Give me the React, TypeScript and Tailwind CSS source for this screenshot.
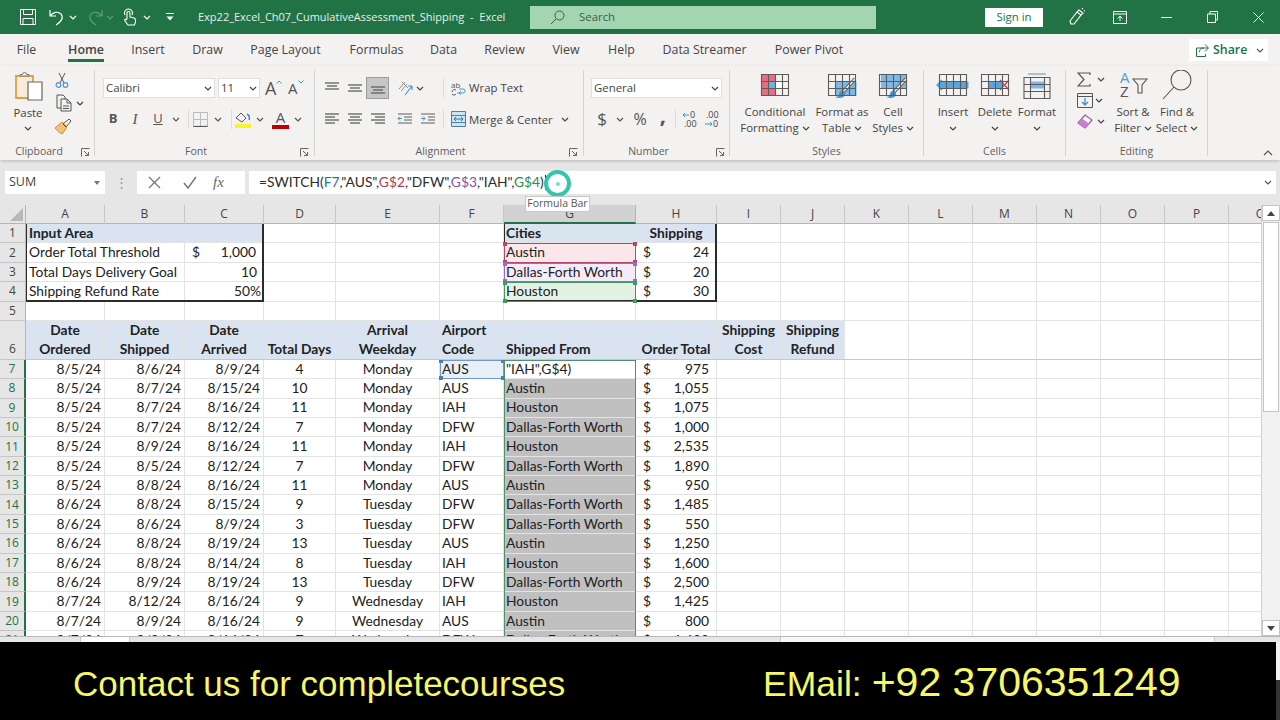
import { ReactNode } from 'react';

// Excel window, column and row sizes read off the screenshot
const columns = ['A', 'B', 'C', 'D', 'E', 'F', 'G', 'H', 'I', 'J', 'K', 'L', 'M', 'N', 'O', 'P', 'Q'];

const tabs = [
  { label: 'File', cls: 'w-[21px] ml-[16px]' },
  { label: 'Home', cls: 'w-[36px] ml-[31px] font-semibold border-b-[3px] border-[#217346]' },
  { label: 'Insert', cls: 'w-[32px] ml-[28px]' },
  { label: 'Draw', cls: 'w-[31px] ml-[28px]' },
  { label: 'Page Layout', cls: 'w-[71px] ml-[27px]' },
  { label: 'Formulas', cls: 'w-[53px] ml-[29px]' },
  { label: 'Data', cls: 'w-[27px] ml-[27px]' },
  { label: 'Review', cls: 'w-[41px] ml-[27px]' },
  { label: 'View', cls: 'w-[28px] ml-[27px]' },
  { label: 'Help', cls: 'w-[27px] ml-[28px]' },
  { label: 'Data Streamer', cls: 'w-[83px] ml-[28px]' },
  { label: 'Power Pivot', cls: 'w-[68px] ml-[29px]' },
];

const D = 'Dallas-Forth Worth';
const rowsData: [string, string, string, string, string, string, string, string][] = [
  ['8/5/24', '8/6/24', '8/9/24', '4', 'Monday', 'AUS', '"IAH",G$4)', '975'],
  ['8/5/24', '8/7/24', '8/15/24', '10', 'Monday', 'AUS', 'Austin', '1,055'],
  ['8/5/24', '8/7/24', '8/16/24', '11', 'Monday', 'IAH', 'Houston', '1,075'],
  ['8/5/24', '8/7/24', '8/12/24', '7', 'Monday', 'DFW', D, '1,000'],
  ['8/5/24', '8/9/24', '8/16/24', '11', 'Monday', 'IAH', 'Houston', '2,535'],
  ['8/5/24', '8/5/24', '8/12/24', '7', 'Monday', 'DFW', D, '1,890'],
  ['8/5/24', '8/8/24', '8/16/24', '11', 'Monday', 'AUS', 'Austin', '950'],
  ['8/6/24', '8/8/24', '8/15/24', '9', 'Tuesday', 'DFW', D, '1,485'],
  ['8/6/24', '8/6/24', '8/9/24', '3', 'Tuesday', 'DFW', D, '550'],
  ['8/6/24', '8/8/24', '8/19/24', '13', 'Tuesday', 'AUS', 'Austin', '1,250'],
  ['8/6/24', '8/8/24', '8/14/24', '8', 'Tuesday', 'IAH', 'Houston', '1,600'],
  ['8/6/24', '8/9/24', '8/19/24', '13', 'Tuesday', 'DFW', D, '2,500'],
  ['8/7/24', '8/12/24', '8/16/24', '9', 'Wednesday', 'IAH', 'Houston', '1,425'],
  ['8/7/24', '8/9/24', '8/16/24', '9', 'Wednesday', 'AUS', 'Austin', '800'],
  ['8/7/24', '8/8/24', '8/14/24', '7', 'Wednesday', 'DFW', D, '1,600'],
];

function Chev({ cls = '' }: { cls?: string }) {
  return (
    <svg width="8" height="5" viewBox="0 0 8 5" className={`shrink-0 ${cls}`}>
      <path d="M1 1l3 3 3-3" fill="none" stroke="currentColor" strokeWidth="1.2" />
    </svg>
  );
}

function Launcher() {
  return (
    <svg width="9" height="9" viewBox="0 0 9 9">
      <path d="M.5 8.5v-8h8M3 3l4.5 4.5M7.5 4v3.5H4" fill="none" stroke="#666" strokeWidth="1" />
    </svg>
  );
}

function Sep() {
  return <div className="w-px h-[86px] bg-[#d4d4d4] shrink-0" />;
}

function VSep({ cls }: { cls: string }) {
  return <div className={`w-px h-[20px] bg-[#dcdcdc] shrink-0 ${cls}`} />;
}

function Group({ w, label, launcher, children }: { w: string; label: string; launcher?: boolean; children: ReactNode }) {
  return (
    <div className={`flex flex-col h-[90px] shrink-0 ${w}`}>
      <div className="flex-1 min-h-0">{children}</div>
      <div className="h-[16px] grid grid-cols-[1fr_auto_1fr] items-center text-[10.5px] text-[#605e5c]">
        <span />
        <span className={launcher ? 'mr-[16px]' : ''}>{label}</span>
        <span className="flex justify-end pr-[4px]">{launcher && <Launcher />}</span>
      </div>
    </div>
  );
}

function Lines({ rows, selected }: { rows: [number, number, number][]; selected?: boolean }) {
  return (
    <div className={`w-[23px] h-[22px] -my-px flex items-center justify-center ${selected ? 'bg-[#c6c6c6] border border-[#9c9c9c]' : ''}`}>
      <svg width="16" height="14" viewBox="0 0 16 14">
        {rows.map(([a, b, y]) => (
          <path key={`${a}${y}`} d={`M${a} ${y}H${b}`} stroke="#5f5f5f" strokeWidth="1.3" />
        ))}
      </svg>
    </div>
  );
}

// Little worksheet grid that most of the big ribbon buttons start from
function SheetIcon({ children, w = 28 }: { children?: ReactNode; w?: number }) {
  return (
    <svg width={w + 6} height="27" viewBox={`0 0 ${w + 6} 27`}>
      {children}
      <path
        d={`M3.5 1.5h${w - 1}v21h-${w - 1}zM3.5 8.5h${w - 1}M3.5 15.5h${w - 1}M10.5 1.5v21M17.5 1.5v21M24.5 1.5v21`}
        fill="none"
        stroke="#5c5c5c"
        strokeWidth="1.1"
      />
    </svg>
  );
}

function Brush() {
  return (
    <>
      <path d="M30 6L17 20" stroke="#5c5c5c" strokeWidth="3.4" />
      <path d="M30 6L17 20" stroke="#f3f2f1" strokeWidth="1.6" />
      <path d="M19 18c-3-1-5 1-5 3s-2 3-4 3c4 2 9 1 10-2 .5-1.500 0-3-1-4z" fill="#4d93c8" />
    </>
  );
}

function BigButton({ w, icon, lines }: { w: string; icon: ReactNode; lines: ReactNode[] }) {
  return (
    <div className={`flex flex-col items-center pt-[3px] shrink-0 ${w}`}>
      <div className="h-[27px] flex items-center">{icon}</div>
      <div className="mt-[4px] flex flex-col items-center text-[11.4px] leading-[16px] text-[#444] whitespace-nowrap">
        {lines.map((l, i) => (
          <div key={i} className="h-[16px] flex items-center gap-[3px]">
            {l}
          </div>
        ))}
      </div>
    </div>
  );
}

function TitleBar() {
  return (
    <div className="h-[34px] bg-[#217346] flex items-center shrink-0 text-white">
      <svg width="16" height="16" viewBox="0 0 16 16" className="ml-[20px] shrink-0">
        <path d="M.5.5h15v15H.5zM3.500.5v5h9v-5M3 15.500v-6h10v6" fill="none" stroke="#fff" strokeWidth="1" />
      </svg>
      <svg width="15" height="17" viewBox="0 0 15 17" className="ml-[13px] shrink-0">
        <path d="M1 1v6h6M1 7c3-4 8-5 11-2 3 4 0 8-5 11" fill="none" stroke="#fff" strokeWidth="1.2" />
      </svg>
      <Chev cls="ml-[5px]" />
      <svg width="15" height="17" viewBox="0 0 15 17" className="ml-[11px] shrink-0">
        <path d="M14 1v6H8M14 7c-3-4-8-5-11-2-3 4 0 8 5 11" fill="none" stroke="#5f9c78" strokeWidth="1.2" />
      </svg>
      <Chev cls="ml-[3px] text-[#5f9c78]" />
      <svg width="14" height="18" viewBox="0 0 14 18" className="ml-[8px] shrink-0">
        <path
          d="M5 11V5a1.500 1.500 0 013 0v4l4 1c1 .5 1.500 1 1.500 2v2l-1 3H6l-3-4c-1-2 1-2 2-1M3 7a4 4 0 117 0"
          fill="none"
          stroke="#fff"
          strokeWidth="1.1"
        />
      </svg>
      <Chev cls="ml-[7px]" />
      <svg width="8" height="8" viewBox="0 0 8 8" className="ml-[15px] shrink-0">
        <path d="M0 .5h8" stroke="#fff" />
        <path d="M.5 3.500h7L4 7.500z" fill="#fff" />
      </svg>
      <div className="ml-[24px] w-[316px] whitespace-nowrap text-[11px] text-[#e4f0e9] shrink-0">
        Exp22_Excel_Ch07_CumulativeAssessment_Shipping&nbsp; -&nbsp; Excel
      </div>
      <div className="ml-[16px] w-[346px] h-[23px] bg-[#a3d5b1] flex items-center shrink-0 text-[#3b5f49] text-[11.4px]">
        <svg width="15" height="15" viewBox="0 0 15 15" className="ml-[20px] shrink-0">
          <circle cx="9.500" cy="5.500" r="4.500" fill="none" stroke="#3b5f49" strokeWidth="1" />
          <path d="M6 9l-5 5" stroke="#3b5f49" strokeWidth="1" />
        </svg>
        <span className="ml-[14px]">Search</span>
      </div>
      <div className="ml-[109px] w-[58px] h-[19px] bg-white text-[#217346] text-[11.4px] flex items-center justify-center shrink-0">
        Sign in
      </div>
      <svg width="16" height="18" viewBox="0 0 16 18" className="ml-[26px] shrink-0">
        <path d="M2 16l-1-3 7-9 4 3-7 9zM8 4l2-2 4 3-2 2M13 1l1-1M15 3l1-.5" fill="none" stroke="#fff" strokeWidth="1.1" />
      </svg>
      <svg width="14" height="13" viewBox="0 0 14 13" className="ml-[28px] shrink-0">
        <path d="M.5.500h13v12H.5zM.5 3h13M7 10V5M4.500 7.500L7 5l2.500 2.500" fill="none" stroke="#fff" strokeWidth="1" />
      </svg>
      <div className="ml-[34px] w-[11px] h-px bg-white shrink-0" />
      <svg width="11" height="12" viewBox="0 0 11 12" className="ml-[35px] shrink-0">
        <path d="M.5 3h8v8.500h-8zM3 3V.5h7.500V9H8.500" fill="none" stroke="#fff" strokeWidth="1" />
      </svg>
      <svg width="11" height="11" viewBox="0 0 11 11" className="ml-[35px] shrink-0">
        <path d="M.5.5l10 10M10.500.5l-10 10" stroke="#fff" strokeWidth="1" />
      </svg>
    </div>
  );
}

function TabRow() {
  return (
    <div className="h-[32px] bg-[#f3f2f1] flex items-start pt-[6px] shrink-0 text-[12.4px] text-[#444]">
      {tabs.map((t) => (
        <div key={t.label} className={`h-[22px] leading-[20px] whitespace-nowrap flex justify-center shrink-0 ${t.cls}`}>
          {t.label}
        </div>
      ))}
      <div className="ml-auto mr-[12px] -mt-[1px] w-[79px] h-[22px] bg-white flex items-center text-[#217346] text-[12.4px] font-semibold shrink-0">
        <svg width="13" height="13" viewBox="0 0 13 13" className="ml-[7px] shrink-0">
          <path d="M9 .5l3.500 3.500L9 7.500M12 4H7C4.500 4 3.500 6 3.500 8M8 4H.5v8.500h9V10" fill="none" stroke="#217346" strokeWidth="1" />
        </svg>
        <span className="ml-[4px]">Share</span>
        <Chev cls="ml-[9px] text-[#555]" />
      </div>
    </div>
  );
}

function Ribbon() {
  return (
    <div className="h-[94px] bg-[#f3f2f1] flex pt-[4px] shrink-0 relative z-10 shadow-[0_1px_3px_rgba(0,0,0,0.2)]">
      <Group w="w-[94px]" label="Clipboard" launcher>
        <div className="flex pt-[2px]">
          <div className="w-[52px] flex flex-col items-center text-[#444] text-[11.4px] ml-[2px] shrink-0">
            <svg width="30" height="29" viewBox="0 0 30 29">
              <path d="M3 4h17v22H3z" fill="#f6ecd8" stroke="#d6a24c" strokeWidth="1.800" />
              <path d="M7 4h9v-1.500h-2.500a2 2 0 00-4 0H7z" fill="#fff" stroke="#777" strokeWidth="1" />
              <path d="M15 10h14v18H15z" fill="#fff" stroke="#666" strokeWidth="1.200" />
            </svg>
            <span className="mt-[4px] leading-[16px]">Paste</span>
            <Chev cls="mt-[5px]" />
          </div>
          <div className="flex flex-col gap-[6px] text-[#444]">
            <svg width="16" height="16" viewBox="0 0 16 16">
              <path d="M5 1l5 10M11 1L6 11" stroke="#555" strokeWidth="1" />
              <circle cx="4.500" cy="13" r="2.300" fill="none" stroke="#4f96c9" strokeWidth="1.200" />
              <circle cx="11.500" cy="13" r="2.300" fill="none" stroke="#4f96c9" strokeWidth="1.200" />
            </svg>
            <div className="flex items-center gap-[1px]">
              <svg width="19" height="18" viewBox="0 0 19 18">
                <path d="M3 1h6l2 2v2M3 1v13h4M7 5h6l4 4v8H7zM13 5v4h4M9 12h6M9 14.500h6" fill="none" stroke="#555" strokeWidth="1" />
              </svg>
              <Chev cls="ml-[2px]" />
            </div>
            <svg width="18" height="17" viewBox="0 0 18 17">
              <path d="M1 10l7-6 5 5-5 7c-2-1-5-3-7-6z" fill="#f0c27a" stroke="#d68a2c" strokeWidth="1" />
              <path d="M9 6l6-5 2 2-5 6z" fill="none" stroke="#555" strokeWidth="1" />
            </svg>
          </div>
        </div>
      </Group>
      <Sep />
      <Group w="w-[218px]" label="Font" launcher>
        <div className="pt-[8px] flex flex-col gap-[11px] text-[#444]">
          <div className="flex items-center h-[20px]">
            <div className="ml-[8px] w-[112px] h-[20px] bg-white border border-[#e1dfdd] flex items-center justify-between px-[2px] text-[11.4px] shrink-0">
              Calibri
              <Chev />
            </div>
            <div className="ml-[3px] w-[42px] h-[20px] bg-white border border-[#e1dfdd] flex items-center justify-between px-[2px] text-[11.4px] shrink-0">
              11
              <Chev />
            </div>
            <div className="ml-[5px] w-[17px] flex items-start text-[#555] text-[18px] leading-[20px] shrink-0">
              A
              <svg width="6" height="4" viewBox="0 0 6 4" className="mt-[2px] shrink-0">
                <path d="M.5 3.500L3 1l2.500 2.500" fill="none" stroke="#3b9ac4" />
              </svg>
            </div>
            <div className="ml-[6px] w-[15px] flex items-start text-[#555] text-[15px] leading-[20px] shrink-0">
              A
              <svg width="6" height="4" viewBox="0 0 6 4" className="mt-[2px] shrink-0">
                <path d="M.5.5L3 3l2.500-2.500" fill="none" stroke="#3b9ac4" />
              </svg>
            </div>
          </div>
          <div className="flex items-center h-[20px] text-[13px] text-[#555]">
            <div className="ml-[8px] w-[20px] text-center font-bold shrink-0">B</div>
            <div className="ml-[2px] w-[20px] text-center italic font-['Liberation_Serif'] text-[15px] shrink-0">I</div>
            <div className="ml-[3px] w-[20px] text-center underline shrink-0">U</div>
            <Chev cls="ml-[4px]" />
            <VSep cls="ml-[8px]" />
            <svg width="15" height="15" viewBox="0 0 15 15" className="ml-[4px] shrink-0">
              <path d="M.5.5h14v14H.5z" fill="none" stroke="#bbb" />
              <path d="M7.500 1v13M1 7.500h13" stroke="#bbb" />
              <path d="M.5 14.500h14" stroke="#555" strokeWidth="1.200" />
            </svg>
            <Chev cls="ml-[6px]" />
            <VSep cls="ml-[9px]" />
            <svg width="16" height="17" viewBox="0 0 16 17" className="ml-[3px] shrink-0">
              <path d="M1 7l5-5 5 5-4 4z" fill="none" stroke="#555" />
              <path d="M12 3c2 1 3 3 2 6" fill="none" stroke="#3b7fb3" strokeWidth="1.400" />
              <path d="M0 13h16v4H0z" fill="#f5f52a" />
            </svg>
            <Chev cls="ml-[5px]" />
            <div className="ml-[8px] w-[17px] flex flex-col items-center shrink-0">
              <span className="text-[15px] leading-[15px] text-[#555]">A</span>
              <span className="w-[17px] h-[4px] bg-[#c00000]" />
            </div>
            <Chev cls="ml-[5px]" />
          </div>
        </div>
      </Group>
      <div className="w-px" />
      <Sep />
      <Group w="w-[267px]" label="Alignment" launcher>
        <div className="pt-[8px] flex flex-col gap-[11px] text-[#444] text-[11.4px]">
          <div className="flex items-center h-[20px]">
            <div className="ml-[5px]" />
            <Lines rows={[[1, 15, 2], [3, 13, 5], [1, 15, 8]]} />
            <Lines rows={[[1, 15, 4], [3, 13, 7], [1, 15, 10]]} />
            <Lines selected rows={[[1, 15, 6], [3, 13, 9], [1, 15, 12]]} />
            <svg width="17" height="16" viewBox="0 0 17 16" className="ml-[8px] shrink-0">
              <path d="M2 9l6-7M4 11l6-7M5 2l6 6" stroke="#8c8c8c" strokeWidth="1" />
              <path d="M8 15L15 6M15 6h-4M15 6v4" fill="none" stroke="#4f96c9" strokeWidth="1.200" />
            </svg>
            <Chev cls="ml-[2px]" />
            <VSep cls="ml-[19px]" />
            <svg width="15" height="17" viewBox="0 0 15 17" className="ml-[7px] shrink-0 overflow-visible">
              <text x="0" y="8" fontSize="8" fill="#555" fontFamily="Open Sans">ab</text>
              <path d="M1 12a2.500 2.500 0 014-2M5 14a2.500 2.500 0 01-4 0" fill="none" stroke="#555" strokeWidth="1" />
              <path d="M6 13h6a2 2 0 000-4H8M8 13l2 2M8 13l2-2" fill="none" stroke="#4f96c9" strokeWidth="1" />
            </svg>
            <span className="ml-[3px] whitespace-nowrap">Wrap Text</span>
          </div>
          <div className="flex items-center h-[20px]">
            <div className="ml-[5px]" />
            <Lines rows={[[1, 15, 2], [1, 11, 5], [1, 15, 8], [1, 11, 11]]} />
            <Lines rows={[[1, 15, 2], [3, 13, 5], [1, 15, 8], [3, 13, 11]]} />
            <Lines rows={[[1, 15, 2], [5, 15, 5], [1, 15, 8], [5, 15, 11]]} />
            <svg width="16" height="14" viewBox="0 0 16 14" className="ml-[8px] shrink-0">
              <path d="M1 2h14M7 5h8M7 8h8M1 11h14" stroke="#5f5f5f" strokeWidth="1.200" />
              <path d="M5 6.500H1M3 4.500l-2 2 2 2" fill="none" stroke="#3b9ac4" strokeWidth="1" />
            </svg>
            <svg width="16" height="14" viewBox="0 0 16 14" className="ml-[7px] shrink-0">
              <path d="M1 2h14M8 5h7M8 8h7M1 11h14" stroke="#5f5f5f" strokeWidth="1.200" />
              <path d="M1 6.500h4M3 4.500l2 2-2 2" fill="none" stroke="#3b9ac4" strokeWidth="1" />
            </svg>
            <VSep cls="ml-[7px]" />
            <svg width="15" height="16" viewBox="0 0 15 16" className="ml-[7px] shrink-0">
              <path d="M.5.5h14v15H.5z" fill="#cfe4f3" stroke="#4f7fa3" />
              <path d="M.5 4.500h14M.5 11.500h14" stroke="#4f7fa3" />
              <path d="M3 8h9M5 6L3 8l2 2M10 6l2 2-2 2" fill="none" stroke="#2f77ab" />
            </svg>
            <span className="ml-[3px] w-[84px] mt-[2px] whitespace-nowrap shrink-0">Merge &amp; Center</span>
            <Chev cls="ml-[8px]" />
          </div>
        </div>
      </Group>
      <div className="w-px" />
      <Sep />
      <Group w="w-[145px]" label="Number" launcher>
        <div className="pt-[8px] flex flex-col gap-[11px] text-[#444]">
          <div className="flex items-center h-[20px]">
            <div className="ml-[7px] w-[131px] h-[20px] bg-white border border-[#e1dfdd] flex items-center justify-between px-[2px] text-[11.4px] shrink-0">
              General
              <Chev />
            </div>
          </div>
          <div className="flex items-center h-[20px] text-[#555]">
            <div className="ml-[11px] w-[14px] text-center text-[17px] shrink-0">$</div>
            <Chev cls="ml-[7px]" />
            <div className="ml-[8px] w-[16px] text-center text-[16px] shrink-0">%</div>
            <div className="ml-[8px] w-[14px] h-[20px] text-center text-[22px] font-bold leading-[10px] shrink-0">,</div>
            <VSep cls="ml-[5px]" />
            <svg width="16" height="18" viewBox="0 0 16 18" className="ml-[6px] shrink-0 overflow-visible">
              <text x="8" y="8" fontSize="9" fill="#444" fontFamily="Open Sans">0</text>
              <text x="2" y="17" fontSize="9" fill="#444" fontFamily="Open Sans">.00</text>
              <path d="M7 5H1M3 3L1 5l2 2" fill="none" stroke="#3b9ac4" />
            </svg>
            <svg width="16" height="18" viewBox="0 0 16 18" className="ml-[6px] shrink-0 overflow-visible">
              <text x="2" y="8" fontSize="9" fill="#444" fontFamily="Open Sans">.00</text>
              <text x="9" y="17" fontSize="9" fill="#444" fontFamily="Open Sans">0</text>
              <path d="M1 14h7M6 12l2 2-2 2" fill="none" stroke="#3b9ac4" />
            </svg>
          </div>
        </div>
      </Group>
      <Sep />
      <Group w="w-[193px]" label="Styles">
        <div className="flex">
          <BigButton
            w="w-[90px]"
            lines={['Conditional', <>Formatting <Chev /></>]}
            icon={
              <SheetIcon>
                <path d="M3.500 1.500h14v7h7v7h-7v7h-14z" fill="#e96d80" />
                <path d="M10.500 8.500h7v7h-7z" fill="#6fb1e0" />
                <path d="M17.500 8.500h7v7h-7z" fill="#fff" />
              </SheetIcon>
            }
          />
          <BigButton
            w="w-[44px]"
            lines={['Format as', <>Table <Chev /></>]}
            icon={
              <SheetIcon>
                <path d="M10.500 8.500h21v14h-21z" fill="#7db9e6" />
                <Brush />
              </SheetIcon>
            }
          />
          <BigButton
            w="w-[58px]"
            lines={['Cell', <>Styles <Chev /></>]}
            icon={
              <SheetIcon>
                <path d="M5 2h26v14H5z" fill="#7db9e6" />
                <Brush />
              </SheetIcon>
            }
          />
        </div>
      </Group>
      <Sep />
      <Group w="w-[141px]" label="Cells">
        <div className="flex pl-[8px]">
          <BigButton
            w="w-[42px]"
            lines={['Insert', <Chev />]}
            icon={
              <SheetIcon>
                <path d="M3.500 8.500h29v7h-29z" fill="#5aa5d9" />
                <path d="M12 12H1M6 7l-5 5 5 5" fill="none" stroke="#5aa5d9" strokeWidth="1.400" />
              </SheetIcon>
            }
          />
          <BigButton
            w="w-[42px]"
            lines={['Delete', <Chev />]}
            icon={
              <SheetIcon>
                <path d="M10.500 8.500h14v7h-14z" fill="#5aa5d9" />
                <path d="M22 7l9 10M31 7l-9 10" stroke="#d9434f" strokeWidth="1.400" />
              </SheetIcon>
            }
          />
          <BigButton
            w="w-[42px]"
            lines={['Format', <Chev />]}
            icon={
              <svg width="28" height="27" viewBox="0 0 28 27">
                <path d="M7 1h14M6 0v2M22 0v2" stroke="#4f96c9" />
                <path d="M7.500 8.500h14v7h-14z" fill="#7db9e6" />
                <path d="M1 4.500h26v21H1zM1 11.500h26M1 18.500h26M7.500 4.500v21M21.500 4.500v21" fill="none" stroke="#5c5c5c" strokeWidth="1.100" />
              </svg>
            }
          />
        </div>
      </Group>
      <Sep />
      <Group w="w-[141px]" label="Editing">
        <div className="flex">
          <div className="w-[45px] pl-[11px] pt-[2px] flex flex-col gap-[6px] shrink-0 text-[#444]">
            <div className="flex items-center gap-[6px]">
              <svg width="14" height="15" viewBox="0 0 14 15">
                <path d="M13 3V1H1l6 6.500L1 14h12v-2" fill="none" stroke="#555" strokeWidth="1.200" />
              </svg>
              <Chev />
            </div>
            <div className="flex items-center gap-[2px]">
              <svg width="16" height="15" viewBox="0 0 16 15">
                <path d="M.5.500h15v14H.5zM.5 3.500h15" fill="none" stroke="#555" />
                <path d="M8 5v7M5 9l3 3 3-3" fill="none" stroke="#3b8fc9" strokeWidth="1.300" />
              </svg>
              <Chev />
            </div>
            <div className="flex items-center gap-[4px]">
              <svg width="16" height="15" viewBox="0 0 16 15">
                <path d="M1 9l7-8 7 5-7 8z" fill="#fff" stroke="#a64fb0" strokeWidth="1.200" />
                <path d="M1 9l4-4.500 7 5L8 14z" fill="#c77fd0" />
              </svg>
              <Chev />
            </div>
          </div>
          <div className="w-[44px] flex flex-col items-center shrink-0 text-[11.4px] leading-[16px] text-[#444]">
            <svg width="32" height="30" viewBox="0 0 32 30" className="shrink-0 overflow-visible">
              <text x="3" y="13" fontSize="15" fill="#4f9fc9" fontFamily="Open Sans">A</text>
              <text x="3" y="27" fontSize="15" fill="#555" fontFamily="Open Sans">Z</text>
              <path d="M16 9h14l-5 6v8h-4v-8z" fill="none" stroke="#555" strokeWidth="1.100" />
            </svg>
            <div className="mt-[4px] whitespace-nowrap">Sort &amp;</div>
            <div className="whitespace-nowrap flex items-center gap-[3px]">Filter <Chev /></div>
          </div>
          <div className="w-[44px] flex flex-col items-center shrink-0 text-[11.4px] leading-[16px] text-[#444]">
            <svg width="32" height="30" viewBox="0 0 32 30" className="shrink-0">
              <circle cx="20" cy="10" r="10" fill="none" stroke="#555" strokeWidth="1.100" />
              <path d="M13 17L2 29" stroke="#555" strokeWidth="1.100" />
            </svg>
            <div className="mt-[4px] whitespace-nowrap">Find &amp;</div>
            <div className="whitespace-nowrap flex items-center gap-[3px]">Select <Chev /></div>
          </div>
        </div>
      </Group>
      <Sep />
      <div className="flex-1 flex items-end justify-end pb-[4px] pr-[7px] text-[#555]">
        <svg width="10" height="6" viewBox="0 0 10 6">
          <path d="M1 5l4-4 4 4" fill="none" stroke="currentColor" strokeWidth="1.200" />
        </svg>
      </div>
    </div>
  );
}

function FormulaBar() {
  return (
    <div className="h-[45px] bg-[#e6e6e6] flex pt-[11px] shrink-0 text-[#444]">
      <div className="ml-[5px] w-[100px] h-[23px] bg-white flex items-center justify-between pl-[4px] pr-[5px] text-[12.5px] shrink-0">
        SUM
        <svg width="6" height="4" viewBox="0 0 6 4"><path d="M0 0h6L3 4z" fill="#777" /></svg>
      </div>
      <div className="w-[32px] h-[23px] flex items-center justify-center text-[#999] text-[13px] shrink-0">⋮</div>
      <div className="w-[108px] h-[23px] bg-white flex items-center shrink-0">
        <svg width="13" height="13" viewBox="0 0 13 13" className="ml-[11px] shrink-0">
          <path d="M1 1l11 11M12 1L1 12" stroke="#777" strokeWidth="1.300" />
        </svg>
        <svg width="14" height="13" viewBox="0 0 14 13" className="ml-[22px] shrink-0">
          <path d="M1 7l4 5 8-11" fill="none" stroke="#777" strokeWidth="1.500" />
        </svg>
        <span className="ml-[16px] italic font-['Liberation_Serif'] text-[15px] text-[#666]">fx</span>
      </div>
      <div className="ml-[4px] w-[1027px] h-[23px] bg-white flex items-center pl-[10px] pr-[4px] shrink-0 font-['Lato'] text-[13.8px] text-[#2b2b2b]">
        <span className="whitespace-nowrap">
          =SWITCH(<span className="text-[#2f6ea8]">F7</span>,"AUS",<span className="text-[#b23a55]">G$2</span>,"DFW",
          <span className="text-[#8a4fa8]">G$3</span>,"IAH",<span className="text-[#2f8a4f]">G$4</span>)
        </span>
        <span className="w-px h-[15px] bg-[#222] ml-px" />
        <Chev cls="ml-auto text-[#555]" />
      </div>
    </div>
  );
}

function Handles({ color }: { color: string }) {
  return (
    <>
      <span className={`absolute -left-[2px] -top-[2px] w-[4px] h-[4px] ${color}`} />
      <span className={`absolute -right-[2px] -top-[2px] w-[4px] h-[4px] ${color}`} />
      <span className={`absolute -left-[2px] -bottom-[2px] w-[4px] h-[4px] ${color}`} />
      <span className={`absolute -right-[2px] -bottom-[2px] w-[4px] h-[4px] ${color}`} />
    </>
  );
}

const line = 'border-r border-b border-[#e3e3e3]';
const cell = `${line} flex items-center whitespace-nowrap min-w-0`;

function Money({ v, cls = '' }: { v: string; cls?: string }) {
  return (
    <div className={`${cell} justify-between pl-[7px] pr-[7px] ${cls}`}>
      <span>$</span>
      <span>{v}</span>
    </div>
  );
}

function Blank({ n, cls = '' }: { n: number; cls?: string }) {
  return (
    <>
      {Array.from({ length: n }, (_, i) => (
        <div key={i} className={`${line} ${cls}`} />
      ))}
    </>
  );
}

function RowHead({ n, on, end }: { n: number; on?: boolean; end?: boolean }) {
  return (
    <div
      className={`bg-[#e6e6e6] border-b border-[#c6c6c6] flex justify-center font-['Open_Sans'] text-[12px] ${
        end ? 'items-end pb-[1px]' : 'items-center'
      } ${on ? 'text-[#217346] border-r-2 border-r-[#217346]' : 'text-[#444] border-r border-r-[#b5b5b5]'}`}
    >
      {n}
    </div>
  );
}

function Sheet() {
  const fill = 'bg-[#d9e4f0]';
  const headCell = `${line} ${fill} font-bold flex flex-col justify-end text-center leading-[19.5px]`;
  return (
    <div className="flex flex-1 min-h-0">
      <div className="w-[1261px] overflow-hidden shrink-0 bg-white">
        <div className="relative grid grid-cols-[26px_79px_80px_79px_72px_104px_64px_132px_81px_64px_64px_64px_64px_64px_64px_64px_64px_64px] grid-rows-[19px_repeat(5,19.4px)_38.8px_repeat(15,19.4px)] font-['Lato'] text-[13.8px] text-[#222]">
          {/* column headers */}
          <div className="bg-[#e6e6e6] border-r border-b border-[#b5b5b5] flex items-end justify-end p-[2px]">
            <svg width="13" height="13" viewBox="0 0 13 13"><path d="M13 0v13H0z" fill="#b8b8b8" /></svg>
          </div>
          {columns.map((c) => (
            <div
              key={c}
              className={`flex items-center justify-center font-['Open_Sans'] text-[12px] text-[#444] border-r ${
                c === 'G'
                  ? 'bg-[#d2d2d2] border-b-2 border-b-[#217346] border-r-[#b5b5b5]'
                  : 'bg-[#e6e6e6] border-b border-b-[#b5b5b5] border-r-[#c6c6c6]'
              }`}
            >
              {c}
            </div>
          ))}

          {/* row 1 */}
          <RowHead n={1} />
          <div className={`${cell} ${fill} border-r-0 font-bold pl-[3px]`}>Input Area</div>
          <div className={`${cell} ${fill} border-r-0`} />
          <div className={`${cell} ${fill}`} />
          <Blank n={3} />
          <div className={`${cell} ${fill} font-bold pl-[2px]`}>Cities</div>
          <div className={`${cell} ${fill} font-bold justify-center`}>Shipping</div>
          <Blank n={9} />

          {/* row 2 */}
          <RowHead n={2} />
          <div className={`${cell} border-r-0 pl-[3px]`}>Order Total Threshold</div>
          <div className={cell} />
          <Money v="1,000" cls="pr-[6px]" />
          <Blank n={3} />
          <div className={`${cell} bg-[#fbe7ea] pl-[2px]`}>Austin</div>
          <Money v="24" />
          <Blank n={9} />

          {/* row 3 */}
          <RowHead n={3} />
          <div className={`${cell} border-r-0 pl-[3px]`}>Total Days Delivery Goal</div>
          <div className={cell} />
          <div className={`${cell} justify-end pr-[6px]`}>10</div>
          <Blank n={3} />
          <div className={`${cell} bg-[#f3ebf8] pl-[2px]`}>{D}</div>
          <Money v="20" />
          <Blank n={9} />

          {/* row 4 */}
          <RowHead n={4} />
          <div className={`${cell} border-r-0 pl-[3px]`}>Shipping Refund Rate</div>
          <div className={cell} />
          <div className={`${cell} justify-end pr-[2px]`}>50%</div>
          <Blank n={3} />
          <div className={`${cell} bg-[#e4f2e6] pl-[2px]`}>Houston</div>
          <Money v="30" />
          <Blank n={9} />

          {/* row 5 */}
          <RowHead n={5} />
          <Blank n={17} />

          {/* row 6 */}
          <RowHead n={6} end />
          <div className={headCell}><span>Date</span><span>Ordered</span></div>
          <div className={headCell}><span>Date</span><span>Shipped</span></div>
          <div className={headCell}><span>Date</span><span>Arrived</span></div>
          <div className={headCell}><span>Total Days</span></div>
          <div className={headCell}><span>Arrival</span><span>Weekday</span></div>
          <div className={`${headCell} text-left pl-[2px]`}><span>Airport</span><span>Code</span></div>
          <div className={`${headCell} text-left pl-[2px]`}><span>Shipped From</span></div>
          <div className={headCell}><span>Order Total</span></div>
          <div className={headCell}><span>Shipping</span><span>Cost</span></div>
          <div className={headCell}><span>Shipping</span><span>Refund</span></div>
          <Blank n={7} />

          {/* data rows */}
          {rowsData.map((r, i) => (
            <div key={i} className="contents">
              <RowHead n={i + 7} on />
              <div className={`${cell} justify-end pr-[3px]`}>{r[0]}</div>
              <div className={`${cell} justify-end pr-[3px]`}>{r[1]}</div>
              <div className={`${cell} justify-end pr-[3px]`}>{r[2]}</div>
              <div className={`${cell} justify-center`}>{r[3]}</div>
              <div className={`${cell} justify-center`}>{r[4]}</div>
              <div className={`${cell} pl-[2px] ${i === 0 ? 'bg-[#e9eff7]' : ''}`}>{r[5]}</div>
              <div className={`${cell} pl-[2px] ${i === 0 ? 'bg-white' : 'bg-[#c0c0c0] border-[#b4b4b4]'}`}>{r[6]}</div>
              <Money v={r[7]} />
              <Blank n={9} />
            </div>
          ))}

          {/* borders and reference colours that sit over the cells */}
          <div className="absolute inset-0 col-start-2 col-end-5 row-start-2 row-end-6 border-l border-r-2 border-b-2 border-[#2b2b2b] pointer-events-none" />
          <div className="absolute inset-0 col-start-8 col-end-10 row-start-2 row-end-6 border-l border-r-2 border-b-2 border-[#2b2b2b] pointer-events-none" />
          <div className="absolute inset-0 col-start-8 col-end-9 row-start-3 row-end-4 border-[1.5px] border-[#b5476a] pointer-events-none">
            <Handles color="bg-[#b5476a]" />
          </div>
          <div className="absolute inset-0 col-start-8 col-end-9 row-start-4 row-end-5 border-[1.5px] border-[#9a6cc0] pointer-events-none">
            <Handles color="bg-[#9a6cc0]" />
          </div>
          <div className="absolute inset-0 col-start-8 col-end-9 row-start-5 row-end-6 border-[1.5px] border-[#3f9a5f] pointer-events-none">
            <Handles color="bg-[#3f9a5f]" />
          </div>
          <div className="absolute inset-0 col-start-7 col-end-8 row-start-8 row-end-9 border-[1.5px] border-[#6f9ac6] pointer-events-none">
            <Handles color="bg-[#4a80b8]" />
          </div>
          <div className="absolute inset-0 col-start-8 col-end-9 row-start-8 row-end-23 border-[1.5px] border-[#4f9070] pointer-events-none" />
          <div className="absolute inset-x-0 top-[-1px] h-px col-start-2 col-end-19 row-start-8 row-end-9 bg-[#c8c8c8] pointer-events-none" />
        </div>
      </div>
      <div className="flex-1 flex flex-col bg-[#f1f1f1] border-l border-[#d0d0d0]">
        <div className="h-[16px] bg-white border border-[#c4c4c4] flex items-center justify-center shrink-0">
          <svg width="8" height="5" viewBox="0 0 8 5"><path d="M0 5h8L4 0z" fill="#444" /></svg>
        </div>
        <div className="h-[190px] bg-white border border-[#c4c4c4] mx-px mt-px shrink-0" />
        <div className="flex-1" />
        <div className="h-[16px] bg-white border border-[#c4c4c4] flex items-center justify-center shrink-0">
          <svg width="8" height="5" viewBox="0 0 8 5"><path d="M0 0h8L4 5z" fill="#444" /></svg>
        </div>
      </div>
    </div>
  );
}

function SheetTabs() {
  return (
    <div className="h-[6px] bg-[#e6e6e6] border-t border-[#b8b8b8] flex shrink-0">
      <div className="ml-[80px] w-[50px] bg-white border-x border-[#c8c8c8]" />
      <div className="ml-[650px] w-[435px] bg-[#f7f7f7] border-x border-[#c8c8c8]" />
    </div>
  );
}

function Footer() {
  return (
    <div className="h-[78px] flex shrink-0">
      <div className="flex-1 bg-black flex items-baseline pt-[18px] font-['Liberation_Sans'] text-[#f6f66a] whitespace-nowrap">
        <span className="ml-[73px] w-[690px] text-[35px] leading-[44px] shrink-0">Contact us for completecourses</span>
        <span className="text-[35.500px] leading-[44px]">EMail:</span>
        <span className="ml-[10px] text-[41px] leading-[44px]">+92 3706351249</span>
      </div>
      <div className="w-[4px] flex flex-col shrink-0">
        <div className="h-[38px] bg-[#f0f0f0]" />
        <div className="flex-1 bg-[#333]" />
      </div>
    </div>
  );
}

export default function App() {
  return (
    <div className="relative w-[1280px] h-[720px] overflow-hidden flex flex-col bg-white font-['Open_Sans']">
      <TitleBar />
      <TabRow />
      <Ribbon />
      <FormulaBar />
      <Sheet />
      <SheetTabs />
      <Footer />

      {/* click ring and tooltip from the screen recording */}
      <div className="absolute left-[544px] top-[170px] w-[27px] h-[27px] rounded-full border-[4px] border-[#37c4ae] flex items-center justify-center z-20">
        <span className="w-[4px] h-[4px] rounded-full bg-[#7fd8c8]" />
      </div>
      <div className="absolute left-[525px] top-[196px] w-[65px] h-[16px] bg-white border border-[#c8c8c8] flex items-center justify-center text-[10.500px] text-[#555] whitespace-nowrap z-20">
        Formula Bar
      </div>
    </div>
  );
}
